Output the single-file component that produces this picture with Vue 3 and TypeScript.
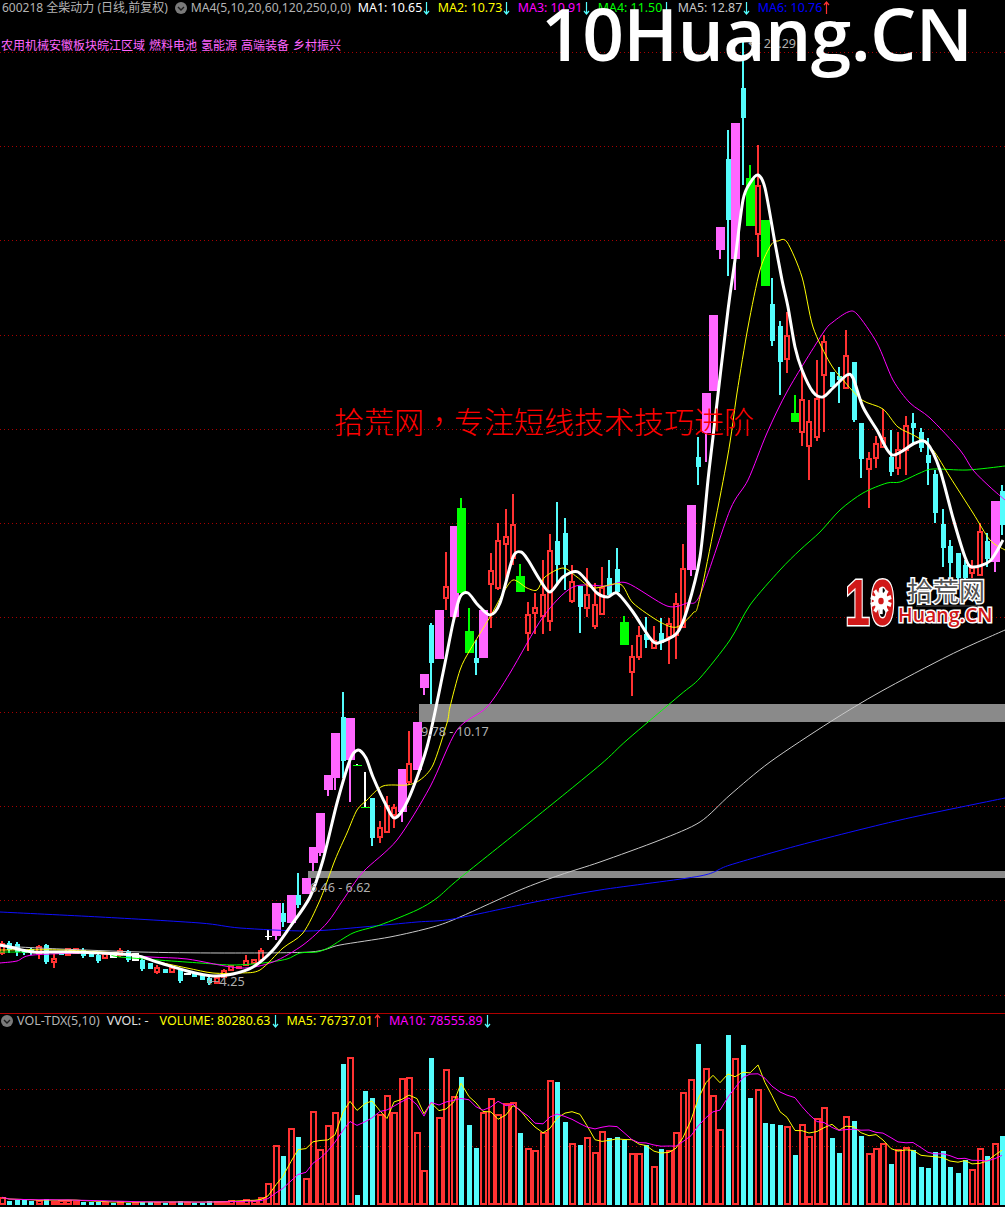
<script setup lang="ts">
type Kind = 'r' | 'c' | 'm' | 'g' | 'w' | 'd'
type Candle = [Kind, number, number, number?, number?]

const RED = '#ff3232'
const CYAN = '#54fcfc'
const MAGENTA = '#ff66ff'
const GREEN = '#00ff00'

const barX = (i: number) => Math.round(1.7 + 7.41 * i)

const candles: Candle[] = [
  ['r', 943, 953, 941, 955], ['c', 943, 950, 941, 953], ['c', 944, 952, 942, 956], ['c', 951, 953, 950, 955],
  ['c', 949, 953, 948, 955], ['r', 946, 953, 945, 959], ['c', 945, 962, 944, 964], ['r', 958, 962, 954, 968],
  ['c', 951, 955], ['r', 948, 955], ['r', 948, 953], ['c', 950, 956, 948, 958],
  ['c', 953, 957], ['c', 955, 961, 953, 963], ['r', 953, 958], ['w', 952, 958],
  ['r', 950, 955, 948, 957], ['c', 951, 960, 950, 962], ['w', 953, 961], ['c', 960, 969, 958, 971],
  ['c', 963, 969], ['r', 967, 972, 965, 974], ['c', 969, 973], ['r', 967, 972],
  ['c', 970, 981, 968, 983], ['w', 973, 975], ['c', 973, 977], ['c', 975, 980],
  ['c', 978, 983, 977, 985], ['r', 977, 983], ['r', 970, 977, 969, 978], ['r', 965, 970],
  ['r', 966, 968], ['r', 960, 965, 955, 966], ['r', 959, 963], ['r', 950, 960, 948, 962],
  ['w', 936, 937, 930, 940], ['m', 903, 936, 903, 940], ['c', 913, 922, 903, 927], ['m', 895, 923],
  ['c', 895, 905, 873, 908], ['m', 878, 894], ['m', 847, 863, 847, 872], ['m', 813, 853, 813, 856],
  ['m', 775, 790, 775, 796], ['m', 733, 778, 733, 790], ['c', 717, 761, 692, 778], ['m', 718, 760, 718, 802],
  ['d', 765, 765, 764, 765], ['d', 807, 807, 772, 807], ['c', 798, 838, 798, 846], ['r', 827, 837, 821, 843],
  ['r', 805, 832, 796, 833], ['r', 807, 815, 804, 828], ['m', 769, 812, 769, 822], ['r', 763, 782, 731, 785],
  ['m', 722, 770], ['m', 674, 688, 674, 695], ['c', 625, 663, 623, 704], ['m', 610, 659],
  ['r', 586, 598, 552, 610], ['m', 526, 617], ['g', 508, 593, 498, 593], ['g', 631, 653, 608, 653],
  ['c', 658, 663, 640, 675], ['m', 610, 658], ['r', 570, 584, 553, 628], ['r', 540, 588, 523, 590],
  ['r', 536, 544, 509, 582], ['r', 524, 558, 494, 565], ['g', 576, 592, 564, 592], ['r', 614, 633, 602, 651],
  ['r', 607, 613, 593, 634], ['r', 594, 616, 560, 634], ['r', 550, 621, 534, 631], ['c', 541, 565, 502, 585],
  ['c', 533, 565, 518, 590], ['r', 581, 601, 565, 603], ['c', 586, 607, 586, 633], ['r', 594, 608, 568, 617],
  ['r', 604, 626, 583, 629], ['r', 587, 614, 567, 615], ['c', 578, 595, 560, 595], ['c', 569, 592, 548, 592],
  ['g', 622, 645, 616, 645], ['r', 656, 672, 645, 696], ['r', 635, 657, 626, 660], ['c', 634, 640, 617, 648],
  ['r', 640, 648, 626, 649], ['c', 633, 643, 618, 650], ['r', 623, 637, 618, 664], ['r', 603, 635, 593, 659],
  ['r', 568, 627, 544, 627], ['m', 505, 570, 505, 576], ['c', 457, 467, 437, 485], ['m', 393, 433, 393, 462],
  ['m', 315, 391], ['m', 227, 250, 227, 259], ['c', 159, 220, 130, 276], ['m', 123, 259, 123, 290],
  ['c', 88, 118, 42, 185], ['g', 178, 226, 165, 226], ['r', 185, 234, 145, 257], ['g', 220, 286],
  ['c', 304, 341, 278, 346], ['c', 326, 362, 321, 395], ['r', 335, 359, 312, 373], ['g', 413, 422, 395, 422],
  ['r', 399, 432, 368, 446], ['r', 421, 446, 400, 480], ['r', 398, 437, 360, 441], ['r', 341, 375, 335, 432],
  ['c', 372, 387], ['c', 376, 380, 367, 403], ['r', 355, 388, 330, 388], ['c', 362, 420, 362, 422],
  ['c', 423, 459, 423, 478], ['r', 458, 469, 452, 508], ['r', 443, 458, 436, 468], ['r', 437, 447, 409, 448],
  ['c', 457, 472, 430, 476], ['r', 449, 468, 432, 475], ['r', 425, 450, 416, 475], ['c', 423, 428, 413, 443],
  ['c', 432, 448, 428, 452], ['c', 455, 463, 438, 485], ['c', 474, 513, 470, 523], ['c', 524, 548, 509, 567],
  ['c', 546, 563, 540, 577], ['c', 553, 578, 553, 580], ['c', 565, 578, 560, 585], ['r', 567, 573, 560, 578],
  ['r', 531, 575, 523, 575], ['c', 541, 559, 533, 567], ['m', 501, 562, 501, 572], ['c', 491, 525, 485, 535]
]

const candleColor: Record<Kind, string> = { r: RED, c: CYAN, m: MAGENTA, g: GREEN, w: '#ffffff', d: GREEN }
const bodyWidth: Record<Kind, number> = { r: 6, c: 5, m: 9, g: 9, w: 7, d: 9 }

interface Shape { key: string; x: number; y: number; w: number; h: number; fill: string; stroke?: string }

function buildCandles(): Shape[] {
  const out: Shape[] = []
  candles.forEach(([k, top, bottom, high, low], i) => {
    const cx = barX(i)
    const color = k === 'd' ? '#ffffff' : candleColor[k]
    const hi = high ?? top
    const lo = low ?? bottom
    if (hi < top) out.push({ key: `u${i}`, x: cx - 1, y: hi, w: 2, h: top - hi, fill: color })
    if (lo > bottom) out.push({ key: `l${i}`, x: cx - 1, y: bottom, w: 2, h: lo - bottom, fill: color })
    const w = bodyWidth[k]
    if (k === 'r') {
      out.push({ key: `b${i}`, x: cx - 2, y: top + 1, w: w - 2, h: Math.max(bottom - top - 1, 1), fill: '#000', stroke: RED })
    } else {
      out.push({ key: `b${i}`, x: cx - w / 2, y: top, w, h: Math.max(bottom - top, 1), fill: candleColor[k] })
    }
  })
  return out
}
const candleShapes = buildCandles()

// Catmull-Rom through the traced points, so the averages read as curves.
function smooth(s: string): string {
  const p = s.trim().split(/\s+/).map((t) => t.split(',').map(Number))
  let d = `M${p[0][0]} ${p[0][1]}`
  for (let i = 0; i < p.length - 1; i++) {
    const a = p[Math.max(i - 1, 0)]
    const b = p[i]
    const c = p[i + 1]
    const e = p[Math.min(i + 2, p.length - 1)]
    const k = 0.14
    d += ` C${(b[0] + (c[0] - a[0]) * k).toFixed(1)} ${(b[1] + (c[1] - a[1]) * k).toFixed(1)} ${(c[0] - (e[0] - b[0]) * k).toFixed(1)} ${(c[1] - (e[1] - b[1]) * k).toFixed(1)} ${c[0]} ${c[1]}`
  }
  return d
}

const maLines = [
  { key: 'grey', color: '#c8c8c8', w: 1, d: smooth(`0,946 60,949 140,952 220,953 310,952 340,945 390,937 433,927 460,917 520,890 560,875
    600,862 660,840 700,822 730,795 770,762 830,722 880,692 950,655 1005,630`) },
  { key: 'blue', color: '#0f0fff', w: 1, d: smooth(`0,912 100,917 200,923 240,928 307,931 363,927 417,922 453,919 530,903 600,890 700,876
    730,865 800,845 900,820 1005,798`) },
  { key: 'green', color: '#00ff00', w: 1, d: smooth(`0,952 100,953 120,957 200,963 233,965 263,963 287,959 300,953 317,952 330,947 353,933 380,925
    417,910 437,898 460,878 530,822 600,765 627,740 680,695 700,678 730,640 750,605 780,570 800,550 820,532 840,510 863,493
    887,483 900,482 920,473 933,469 967,470 1005,466`) },
  { key: 'magenta', color: '#ff00ff', w: 1, d: smooth(`0,963 17,961 33,955 100,953 150,957 187,959 240,968 273,962 303,945 327,923 343,900 363,872
    397,840 430,787 457,730 487,707 510,673 543,617 573,587 607,586 627,583 667,606 687,603 700,595 730,510 748,480 767,433
    788,390 823,333 833,322 848,312 857,314 877,343 893,380 910,403 930,418 960,450 973,470 990,487 1005,500`) },
  { key: 'yellow', color: '#ffff00', w: 1, d: smooth(`0,950 60,950 130,954 150,960 187,968 213,973 240,973 260,970 283,948 303,933 320,900 335,860
    347,833 357,810 367,800 383,786 407,785 420,780 433,765 447,723 450,707 460,670 470,650 490,617 502,595 513,580 527,588
    537,590 545,577 563,568 577,577 593,588 620,584 633,603 660,622 677,627 693,613 700,597 727,460 737,393 748,327 760,270
    771,245 778,241 787,242 802,277 813,327 830,363 843,380 862,400 883,409 898,427 917,437 933,450 950,477 973,513 990,540 1005,550`) },
  { key: 'white', color: '#ffffff', w: 3, d: smooth(`0,945 10,947 33,952 70,952 133,955 157,962 187,971 213,976 233,974 253,967 273,950 290,927
    310,897 323,860 337,803 350,760 358,750 366,758 373,777 386,805 395,818 408,800 427,747 443,673 453,623 460,597 468,593
    478,605 490,615 500,603 513,557 521,552 528,560 540,580 550,592 563,577 578,572 597,593 608,597 617,593 633,612 650,638
    658,643 677,633 687,610 700,557 708,480 713,437 728,310 735,260 743,200 750,183 758,175 765,188 775,243 782,280 788,307
    795,347 802,370 813,392 823,397 833,388 847,375 853,378 863,407 877,430 892,455 915,443 927,443 940,470 953,518 965,557
    972,567 990,561 1003,540`) }
]

const mainGrid = [52, 146.5, 240.5, 335, 429, 523, 617.5, 712, 806, 900, 995]
const volGrid = [1089, 1146]

const zones = [
  { key: 'a', x: 419, y: 704, w: 586, h: 18 },
  { key: 'b', x: 308, y: 871, w: 697, h: 7 }
]

const volTops: [Kind, number][] = [
  ['r', 562], ['c', 572], ['c', 570], ['c', 570], ['c', 572], ['r', 570], ['c', 568], ['r', 572], ['r', 570], ['r', 570], ['r', 572],
  ['c', 575], ['c', 576], ['c', 576], ['r', 575], ['c', 578], ['r', 573], ['c', 578], ['r', 577], ['c', 575], ['c', 575], ['r', 575],
  ['c', 578], ['r', 576], ['c', 574], ['r', 576], ['c', 578], ['c', 578], ['c', 574], ['r', 573], ['r', 573], ['r', 571], ['r', 573],
  ['r', 567], ['r', 571], ['r', 560], ['r', 518], ['r', 404], ['c', 438], ['r', 353], ['c', 381], ['r', 503], ['r', 302], ['r', 418],
  ['r', 344], ['r', 305], ['c', 162], ['r', 140], ['c', 555], ['c', 243], ['c', 264], ['r', 312], ['r', 254], ['r', 305], ['r', 205],
  ['r', 200], ['r', 365], ['r', 480], ['c', 144], ['r', 320], ['r', 176], ['r', 257], ['c', 201], ['c', 345], ['c', 414], ['r', 305],
  ['r', 263], ['r', 313], ['r', 278], ['r', 275], ['c', 369], ['r', 413], ['r', 420], ['r', 365], ['r', 209], ['c', 216], ['c', 336],
  ['r', 399], ['c', 405], ['r', 380], ['r', 425], ['r', 362], ['c', 384], ['c', 381], ['c', 390], ['r', 428], ['r', 428], ['c', 405],
  ['r', 467], ['c', 417], ['r', 419], ['r', 365], ['r', 245], ['r', 206], ['c', 102], ['r', 173], ['r', 254], ['r', 356], ['c', 75],
  ['r', 143], ['c', 105], ['c', 264], ['r', 236], ['c', 339], ['c', 342], ['c', 345], ['r', 347], ['c', 435], ['r', 341], ['r', 377],
  ['r', 323], ['r', 290], ['c', 384], ['c', 429], ['r', 317], ['c', 333], ['c', 378], ['r', 428], ['r', 413], ['r', 398], ['c', 462],
  ['r', 416], ['r', 410], ['c', 420], ['c', 471], ['c', 474], ['c', 426], ['c', 423], ['c', 471], ['c', 489], ['c', 450], ['r', 476],
  ['r', 413], ['c', 438], ['r', 398], ['c', 378]
]

const volY = (z: number) => 1010 + z / 3
const VOL_BASE = 1205

const volBars: Shape[] = volTops.map(([k, z], i) => {
  const cx = barX(i)
  const y = volY(z)
  return k === 'r'
    ? { key: `v${i}`, x: cx - 2, y: y + 1, w: 5, h: Math.max(VOL_BASE - y - 2, 1), fill: 'none', stroke: RED }
    : { key: `v${i}`, x: cx - 2.5, y, w: 5, h: VOL_BASE - y, fill: CYAN }
})

function volumeMa(n: number): string {
  return volTops
    .map((_, i) => {
      const from = Math.max(0, i - n + 1)
      const slice = volTops.slice(from, i + 1)
      const avg = slice.reduce((sum, [, z]) => sum + volY(z), 0) / slice.length
      return `${barX(i)},${avg.toFixed(1)}`
    })
    .join(' ')
}
const volMa5 = volumeMa(5)
const volMa10 = volumeMa(10)

const maLegend = [
  { label: 'MA1: 10.65', color: '#ffffff', up: false },
  { label: 'MA2: 10.73', color: '#ffff00', up: false },
  { label: 'MA3: 10.91', color: '#ff00ff', up: false },
  { label: 'MA4: 11.50', color: '#00ff00', up: false },
  { label: 'MA5: 12.87', color: '#c8c8c8', up: false },
  { label: 'MA6: 10.76', color: '#0000ff', up: true }
]
const volLegend = [
  { label: 'VOLUME: 80280.63', color: '#ffff00', up: false },
  { label: 'MA5: 76737.01', color: '#ffff00', up: true },
  { label: 'MA10: 78555.89', color: '#ff00ff', up: false }
]
const concepts = ['农用机械安徽板块皖江区域', '燃料电池', '氢能源', '高端装备', '乡村振兴']

const gearTeeth = Array.from({ length: 10 }, (_, i) => i * 36)
</script>

<template>
  <div class="screen">
    <section class="main-panel">
      <svg class="canvas" viewBox="0 0 1005 1013" width="1005" height="1013">
        <line
          v-for="y in mainGrid"
          :key="y"
          class="grid"
          x1="0"
          x2="1005"
          :y1="y"
          :y2="y"
        />
        <rect
          v-for="s in candleShapes"
          :key="s.key"
          :x="s.x"
          :y="s.y"
          :width="s.w"
          :height="s.h"
          :fill="s.fill"
          :stroke="s.stroke"
          :stroke-width="s.stroke ? 2 : 0"
          shape-rendering="crispEdges"
        />
        <rect
          v-for="z in zones"
          :key="z.key"
          :x="z.x"
          :y="z.y"
          :width="z.w"
          :height="z.h"
          fill="#8a8a8a"
        />
        <path
          v-for="l in maLines"
          :key="l.key"
          :d="l.d"
          fill="none"
          :stroke="l.color"
          :stroke-width="l.w"
          stroke-linejoin="round"
        />
        <text class="note" x="421" y="736">9.78 - 10.17</text>
        <text class="note" x="310" y="892">6.46 - 6.62</text>
        <text class="note" x="207" y="986">←4.25</text>
        <text class="note" x="748" y="48">← 21.29</text>
      </svg>

      <header class="legend">
        <span class="muted">600218 全柴动力 (日线,前复权)</span>
        <svg class="chevron" viewBox="0 0 12 12" width="12" height="12">
          <circle cx="6" cy="6" r="6" fill="#7a7a7a" />
          <path d="M3 5 L6 8 L9 5" fill="none" stroke="#1c1c1c" stroke-width="1.4" />
        </svg>
        <span class="muted formula">MA4(5,10,20,60,120,250,0,0)</span>
        <span v-for="m in maLegend" :key="m.label" class="ma" :style="{ color: m.color }">
          {{ m.label }}
          <svg class="arrow" viewBox="0 0 7 14" width="7" height="14">
            <path
              v-if="m.up"
              d="M3.5 1 V13 M1 4 L3.5 1 L6 4"
              fill="none"
              stroke="#ff3232"
              stroke-width="1.2"
            />
            <path v-else d="M3.5 1 V13 M1 10 L3.5 13 L6 10" fill="none" stroke="#54fcfc" stroke-width="1.2" />
          </svg>
        </span>
      </header>
      <div class="concepts">
        <span v-for="c in concepts" :key="c">{{ c }}</span>
      </div>

      <div class="watermark">10Huang.CN</div>
      <div class="slogan">拾荒网，专注短线技术技巧进阶</div>

      <svg class="logo" viewBox="0 0 160 60" width="160" height="60">
        <text class="logo-ten" x="1" y="52" textLength="50" lengthAdjust="spacingAndGlyphs">10</text>
        <g transform="translate(37 28) scale(0.85 1.05)">
          <rect
            v-for="a in gearTeeth"
            :key="a"
            x="-2"
            y="-12.5"
            width="4"
            height="6"
            fill="#fff"
            :transform="`rotate(${a})`"
          />
          <circle r="8.5" fill="#fff" />
          <circle r="3.2" fill="#d01818" />
        </g>
        <text class="logo-cn" x="63" y="28">拾荒网</text>
        <line x1="72" x2="136" y1="33" y2="33" stroke="#333" stroke-width="1.5" />
        <text class="logo-en" x="54" y="49">Huang.CN</text>
      </svg>
    </section>

    <section class="vol-panel">
      <header class="legend vol-legend">
        <svg class="chevron" viewBox="0 0 12 12" width="12" height="12">
          <circle cx="6" cy="6" r="6" fill="#7a7a7a" />
          <path d="M3 5 L6 8 L9 5" fill="none" stroke="#1c1c1c" stroke-width="1.4" />
        </svg>
        <span class="muted">VOL-TDX(5,10)</span>
        <span class="light">VVOL: -</span>
        <span v-for="m in volLegend" :key="m.label" class="ma" :style="{ color: m.color }">
          {{ m.label }}
          <svg class="arrow" viewBox="0 0 7 14" width="7" height="14">
            <path
              v-if="m.up"
              d="M3.5 1 V13 M1 4 L3.5 1 L6 4"
              fill="none"
              stroke="#ff3232"
              stroke-width="1.2"
            />
            <path v-else d="M3.5 1 V13 M1 10 L3.5 13 L6 10" fill="none" stroke="#54fcfc" stroke-width="1.2" />
          </svg>
        </span>
      </header>
      <svg class="vol-canvas" viewBox="0 1034 1005 173" width="1005" height="173">
        <line
          v-for="y in volGrid"
          :key="y"
          class="grid"
          x1="0"
          x2="1005"
          :y1="y"
          :y2="y"
        />
        <rect
          v-for="b in volBars"
          :key="b.key"
          :x="b.x"
          :y="b.y"
          :width="b.w"
          :height="b.h"
          :fill="b.fill"
          :stroke="b.stroke"
          :stroke-width="b.stroke ? 2 : 0"
          shape-rendering="crispEdges"
        />
        <polyline :points="volMa5" fill="none" stroke="#ffff00" stroke-width="1" />
        <polyline :points="volMa10" fill="none" stroke="#ff00ff" stroke-width="1" />
      </svg>
    </section>
  </div>
</template>

<style scoped>
.screen {
  width: 1005px;
  height: 1207px;
  background: #000;
  overflow: hidden;
  font-family: "Noto Sans", "Noto Sans CJK SC", sans-serif;
  font-size: 12px;
  line-height: 16px;
}
.main-panel {
  position: relative;
  height: 1013px;
  border-bottom: 1px solid #b00000;
  overflow: hidden;
}
.canvas {
  position: absolute;
  inset: 0;
  display: block;
}
.grid {
  stroke: #a80000;
  stroke-width: 1;
  stroke-dasharray: 1 3;
  shape-rendering: crispEdges;
}
.note {
  fill: #b0b0b0;
  font-size: 12.6px;
}
.legend {
  position: relative;
  display: flex;
  align-items: center;
  height: 16px;
  padding-left: 2px;
  white-space: nowrap;
}
.muted {
  color: #b4b4b4;
}
.light {
  color: #e0e0e0;
  margin-left: 7px;
  margin-right: 3px;
}
.chevron {
  flex: none;
  margin-left: 7px;
}
.formula {
  margin-left: 4px;
  margin-right: 7px;
  font-size: 12.15px;
}
.ma {
  display: inline-flex;
  flex: none;
  align-items: center;
  gap: 1px;
  width: 80px;
  font-size: 12.4px;
}
.arrow {
  flex: none;
}
.concepts {
  position: relative;
  display: flex;
  gap: 4px;
  margin-top: 22px;
  padding-left: 1px;
  color: #ff66ff;
  white-space: nowrap;
}
.watermark {
  position: absolute;
  left: 541px;
  top: -15px;
  color: #fff;
  font-family: "Open Sans", sans-serif;
  font-weight: 600;
  font-size: 73px;
  letter-spacing: -0.6px;
  line-height: 96px;
  white-space: nowrap;
}
.slogan {
  position: absolute;
  left: 334px;
  top: 403px;
  color: #ff0000;
  font-family: "Noto Sans CJK TC", "Noto Sans CJK SC", sans-serif;
  font-weight: 300;
  font-size: 30px;
  line-height: 34px;
  white-space: nowrap;
}
.logo {
  position: absolute;
  left: 844px;
  top: 573px;
  overflow: visible;
}
.logo-ten {
  fill: #d01818;
  stroke: #fff;
  stroke-width: 3px;
  paint-order: stroke;
  font-family: "Liberation Sans", sans-serif;
  font-weight: 700;
  font-size: 64px;
}
.logo-cn {
  fill: #555;
  stroke: #fff;
  stroke-width: 3px;
  paint-order: stroke;
  font-family: "Noto Sans CJK SC", sans-serif;
  font-size: 26px;
}
.logo-en {
  fill: #d01818;
  stroke: #fff;
  stroke-width: 3px;
  paint-order: stroke;
  font-family: "Open Sans", sans-serif;
  font-weight: 600;
  font-size: 19.5px;
}
.vol-panel {
  display: flex;
  flex-direction: column;
  height: 193px;
}
.vol-legend {
  box-sizing: border-box;
  height: 20px;
  flex: none;
  padding-left: 0;
  padding-bottom: 6px;
  font-size: 12.5px;
}
.vol-legend .chevron {
  margin-left: 1px;
  margin-right: 4px;
}
.vol-legend .ma {
  width: auto;
  margin-left: 8px;
  font-size: 12.5px;
}
.vol-canvas {
  display: block;
  overflow: visible;
}
</style>
